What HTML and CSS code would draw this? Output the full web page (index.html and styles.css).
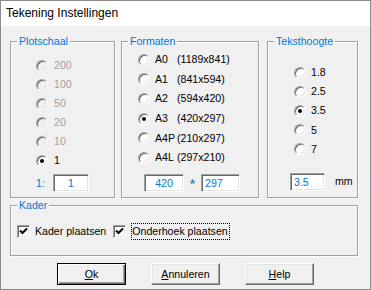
FILE: index.html
```html
<!DOCTYPE html>
<html>
<head>
<meta charset="utf-8">
<link rel="stylesheet" href="styles.css">
</head>
<body>
<div class="window">
  <div class="titlebar">Tekening Instellingen</div>
  <div class="content">
    <div class="toprow">
      <fieldset class="group g-plot">
        <legend>Plotschaal</legend>
        <div class="inner">
          <div class="opt disabled"><span class="radio"></span><span>200</span></div>
          <div class="opt disabled"><span class="radio"></span><span>100</span></div>
          <div class="opt disabled"><span class="radio"></span><span>50</span></div>
          <div class="opt disabled"><span class="radio"></span><span>20</span></div>
          <div class="opt disabled"><span class="radio"></span><span>10</span></div>
          <div class="opt"><span class="radio checked"></span><span>1</span></div>
          <div class="fieldrow"><span class="blue scale-lbl">1:</span><span class="edit center w-plot">1</span></div>
        </div>
      </fieldset>
      <fieldset class="group g-form">
        <legend>Formaten</legend>
        <div class="inner">
          <div class="opt"><span class="radio"></span><span class="fname">A0</span><span>(1189x841)</span></div>
          <div class="opt"><span class="radio"></span><span class="fname">A1</span><span>(841x594)</span></div>
          <div class="opt"><span class="radio"></span><span class="fname">A2</span><span>(594x420)</span></div>
          <div class="opt"><span class="radio checked"></span><span class="fname">A3</span><span>(420x297)</span></div>
          <div class="opt"><span class="radio"></span><span class="fname">A4P</span><span>(210x297)</span></div>
          <div class="opt"><span class="radio"></span><span class="fname">A4L</span><span>(297x210)</span></div>
          <div class="fieldrow"><span class="edit center w-f1">420</span><span class="blue star">*</span><span class="edit left w-f2">297</span></div>
        </div>
      </fieldset>
      <fieldset class="group g-text">
        <legend>Teksthoogte</legend>
        <div class="inner">
          <div class="opt"><span class="radio"></span><span>1.8</span></div>
          <div class="opt"><span class="radio"></span><span>2.5</span></div>
          <div class="opt"><span class="radio checked"></span><span>3.5</span></div>
          <div class="opt"><span class="radio"></span><span>5</span></div>
          <div class="opt"><span class="radio"></span><span>7</span></div>
          <div class="fieldrow"><span class="edit left w-t">3.5</span><span class="unit">mm</span></div>
        </div>
      </fieldset>
    </div>
    <fieldset class="group g-kader">
      <legend>Kader</legend>
      <div class="inner checks">
        <div class="check"><span class="box"><svg width="9" height="9" viewBox="0 0 9 9"><path d="M1 3.5 L3.5 6 L8 1.5" fill="none" stroke="#000" stroke-width="2"/></svg></span><span class="clabel c1">Kader plaatsen</span></div>
        <div class="check"><span class="box"><svg width="9" height="9" viewBox="0 0 9 9"><path d="M1 3.5 L3.5 6 L8 1.5" fill="none" stroke="#000" stroke-width="2"/></svg></span><span class="clabel focus">Onderhoek plaatsen</span></div>
      </div>
    </fieldset>
    <div class="buttons">
      <button class="btn default"><u>O</u>k</button>
      <button class="btn"><u>A</u>nnuleren</button>
      <button class="btn"><u>H</u>elp</button>
    </div>
  </div>
</div>
</body>
</html>
```
FILE: styles.css
```css
* { box-sizing: border-box; }
html, body { margin: 0; padding: 0; }
body {
  width: 371px;
  height: 290px;
  background: #f0f0f0;
  font-family: "Liberation Sans", Arial, sans-serif;
  font-size: 10.6px;
  line-height: 13px;
  color: #000;
}
.window {
  width: 371px;
  height: 290px;
  border: 1px solid #8c8c8c;
  background: #f0f0f0;
  display: flex;
  flex-direction: column;
}
.titlebar {
  height: 25px;
  background: #fff;
  font-family: "Liberation Sans", Arial, sans-serif;
  font-size: 12px;
  line-height: 25px;
  padding-left: 5px;
}
.content {
  padding: 9px 0 0 9px;
}
.toprow {
  display: flex;
  height: 163px;
}
.group {
  margin: 0;
  padding: 0;
  min-width: 0;
  border: 1px solid #a0a0a0;
  box-shadow: inset 1px 1px 0 #fff, 1px 1px 0 #fff;
}
.group legend {
  margin-left: 6px;
  padding: 0 2px;
  color: #0078d7;
  line-height: 13px;
  background: #f0f0f0;
}
.g-plot { width: 105px; }
.g-form { width: 138px; margin-left: 6px; }
.g-text { width: 91px; margin-left: 8px; }
.g-kader { width: 348px; height: 57px; margin-top: 1px; }

.inner { display: flex; flex-direction: column; }
.g-plot .inner { padding: 8px 0 0 25px; }
.g-form .inner { padding: 2px 0 0 16px; }
.g-text .inner { padding: 15px 0 0 26px; }

.opt {
  display: flex;
  align-items: center;
  height: 19px;
  white-space: nowrap;
}
.g-form .opt { height: 19.6px; }
.g-text .opt { height: 19.2px; }
.opt .radio { margin-right: 6px; }
.g-form .opt .radio, .g-text .opt .radio { margin-right: 5px; }
.disabled { color: #a0a0a0; }

.radio {
  width: 12px;
  height: 12px;
  flex: none;
  border-radius: 50%;
  background: #fff;
  border: 1px solid;
  border-color: #a0a0a0 #fff #fff #a0a0a0;
  box-shadow: inset 1px 1px 0 #696969, inset -1px -1px 0 #e3e3e3;
  display: flex;
  align-items: center;
  justify-content: center;
}
.disabled .radio { background: #f0f0f0; }
.radio.checked::after {
  content: "";
  width: 4px;
  height: 4px;
  border-radius: 50%;
  background: #000;
}
.fname { width: 22px; }

.fieldrow {
  display: flex;
  align-items: center;
  height: 18px;
}
.g-plot .fieldrow { margin-top: 4px; }
.g-form .fieldrow { margin-top: 6px; margin-left: 6px; }
.g-text .fieldrow { margin-top: 14px; margin-left: -4px; }

.blue { color: #0078d7; }
.scale-lbl { width: 17px; }
.star { width: 17px; text-align: center; font-size: 15px; line-height: 18px; padding-top: 3px; }
.unit { margin-left: 10px; }

.edit {
  display: block;
  height: 18px;
  line-height: 16px;
  background: #fff;
  color: #0078d7;
  border: 1px solid;
  border-color: #a0a0a0 #fff #fff #a0a0a0;
  box-shadow: inset 1px 1px 0 #696969, inset -1px -1px 0 #e3e3e3;
}
.edit.center { text-align: center; }
.edit.left { padding-left: 3px; }
.w-plot { width: 36px; }
.w-f1 { width: 40px; }
.w-f2 { width: 39px; }
.w-t { width: 35px; }

.checks {
  flex-direction: row;
  padding: 11px 0 0 6px;
  align-items: center;
}
.check {
  display: flex;
  align-items: center;
  height: 17px;
}
.box {
  width: 13px;
  height: 13px;
  flex: none;
  background: #fff;
  border: 1px solid;
  border-color: #a0a0a0 #fff #fff #a0a0a0;
  box-shadow: inset 1px 1px 0 #696969, inset -1px -1px 0 #e3e3e3;
  display: flex;
  align-items: center;
  justify-content: center;
}
.clabel { margin-left: 5px; white-space: nowrap; }
.c1 { margin-right: 7px; }
.focus {
  border: 1px dotted #000;
  padding: 1px 1px 1px 0;
}

.buttons {
  display: flex;
  padding: 7px 0 0 47px;
}
.btn {
  width: 69px;
  height: 22px;
  margin-right: 25px;
  padding: 0;
  font-family: "Liberation Sans", Arial, sans-serif;
  font-size: 10.6px;
  color: #000;
  background: #f0f0f0;
  border: 1px solid;
  border-color: #fff #696969 #696969 #fff;
  box-shadow: inset -1px -1px 0 #a0a0a0, inset 1px 1px 0 #e3e3e3;
}
.btn.default {
  border: 1px solid #000;
  box-shadow: inset 1px 1px 0 #fff, inset -1px -1px 0 #696969, inset -2px -2px 0 #a0a0a0;
}
```
